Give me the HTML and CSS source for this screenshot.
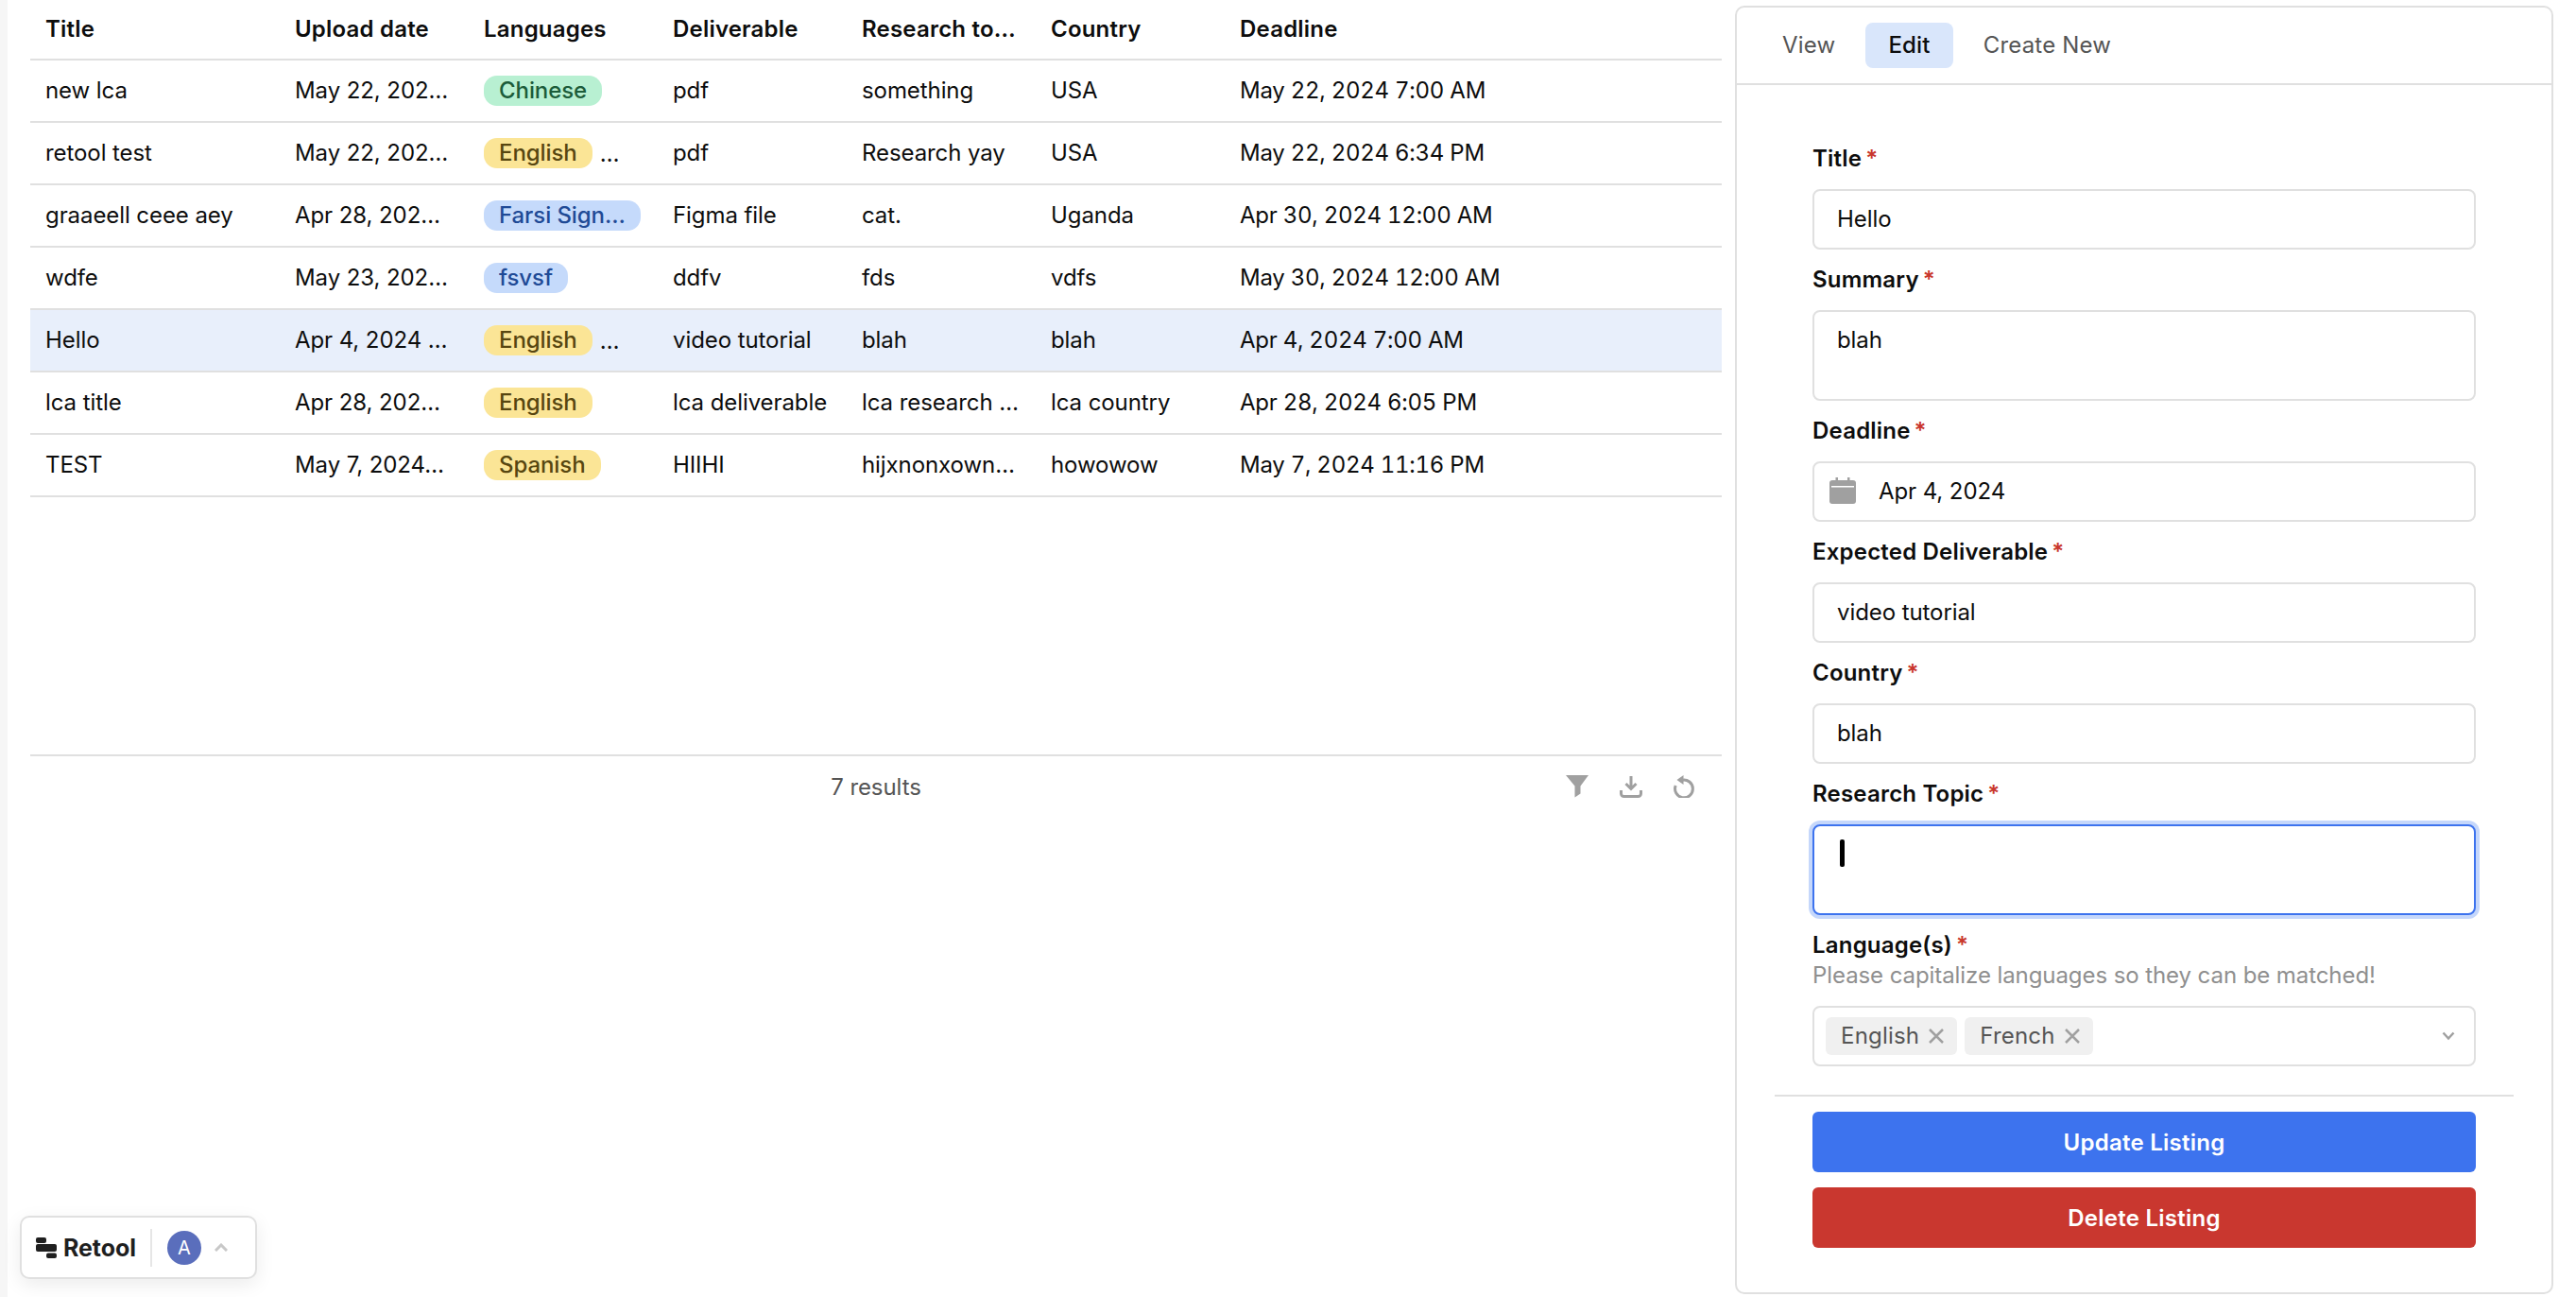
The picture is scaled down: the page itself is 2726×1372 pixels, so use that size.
FILE: index.html
```html
<!DOCTYPE html>
<html lang="en">
<head>
    <meta charset="UTF-8">
    <meta name="viewport" content="width=device-width, initial-scale=1.0">
    <title>Listings</title>
    <link rel="stylesheet" href="styles.css">
</head>
<body>
    <div class="strip"></div>

    <main class="listings">
        <div class="table-wrap">
            <table class="table">
                <thead>
                    <tr>
                        <th class="col-title">Title</th>
                        <th class="col-std">Upload date</th>
                        <th class="col-std">Languages</th>
                        <th class="col-std">Deliverable</th>
                        <th class="col-std">Research to…</th>
                        <th class="col-std">Country</th>
                        <th>Deadline</th>
                    </tr>
                </thead>
                <tbody>
                    <tr>
                        <td>new lca</td>
                        <td>May 22, 202…</td>
                        <td><div class="pills"><span class="pill pill-green">Chinese</span></div></td>
                        <td>pdf</td>
                        <td>something</td>
                        <td>USA</td>
                        <td class="num">May 22, 2024 7:00 AM</td>
                    </tr>
                    <tr>
                        <td>retool test</td>
                        <td>May 22, 202…</td>
                        <td><div class="pills"><span class="pill pill-yellow">English</span><span class="more">…</span></div></td>
                        <td>pdf</td>
                        <td>Research yay</td>
                        <td>USA</td>
                        <td class="num">May 22, 2024 6:34 PM</td>
                    </tr>
                    <tr>
                        <td>graaeell ceee aey</td>
                        <td>Apr 28, 202…</td>
                        <td><div class="pills"><span class="pill pill-blue">Farsi Sign…</span></div></td>
                        <td>Figma file</td>
                        <td>cat.</td>
                        <td>Uganda</td>
                        <td class="num">Apr 30, 2024 12:00 AM</td>
                    </tr>
                    <tr>
                        <td>wdfe</td>
                        <td>May 23, 202…</td>
                        <td><div class="pills"><span class="pill pill-blue">fsvsf</span></div></td>
                        <td>ddfv</td>
                        <td>fds</td>
                        <td>vdfs</td>
                        <td class="num">May 30, 2024 12:00 AM</td>
                    </tr>
                    <tr class="selected">
                        <td>Hello</td>
                        <td>Apr 4, 2024 …</td>
                        <td><div class="pills"><span class="pill pill-yellow">English</span><span class="more">…</span></div></td>
                        <td>video tutorial</td>
                        <td>blah</td>
                        <td>blah</td>
                        <td class="num">Apr 4, 2024 7:00 AM</td>
                    </tr>
                    <tr>
                        <td>lca title</td>
                        <td>Apr 28, 202…</td>
                        <td><div class="pills"><span class="pill pill-yellow">English</span></div></td>
                        <td>lca deliverable</td>
                        <td>lca research …</td>
                        <td>lca country</td>
                        <td class="num">Apr 28, 2024 6:05 PM</td>
                    </tr>
                    <tr>
                        <td>TEST</td>
                        <td>May 7, 2024…</td>
                        <td><div class="pills"><span class="pill pill-yellow">Spanish</span></div></td>
                        <td>HIIHI</td>
                        <td>hijxnonxown…</td>
                        <td>howowow</td>
                        <td class="num">May 7, 2024 11:16 PM</td>
                    </tr>
                </tbody>
            </table>
        </div>
        <div class="table-footer">
            <span></span>
            <span class="results">7 results</span>
            <div class="table-actions">
                <svg class="icon" width="24" height="24" viewBox="0 0 24 24"><path d="M0 0H24L15.5 11.5V19.5L9.5 23.5V11.5Z" fill="#a0a0a0"/></svg>
                <svg class="icon" width="24" height="24" viewBox="0 0 24 24" fill="none" stroke="#a0a0a0" stroke-width="3"><path d="M12 1V14M6.5 9L12 14.5L17.5 9"/><path d="M1.5 16V19.5A3 3 0 0 0 4.500 22.500H19.500A3 3 0 0 0 22.500 19.500V16"/></svg>
                <svg class="icon" width="22" height="24" viewBox="0 0 22 24" fill="none"><path d="M9 5.200A9.400 9.400 0 1 1 2.200 11" stroke="#a0a0a0" stroke-width="3"/><path d="M10.500 0V10L3.500 5Z" fill="#a0a0a0"/></svg>
            </div>
        </div>
    </main>

    <aside class="panel">
        <nav class="tabs">
            <span class="tab">View</span>
            <span class="tab tab-active">Edit</span>
            <span class="tab">Create New</span>
        </nav>
        <form class="form">
            <div class="label">Title<span class="req">*</span></div>
            <div class="field">Hello</div>

            <div class="label">Summary<span class="req">*</span></div>
            <div class="field field-tall">blah</div>

            <div class="label">Deadline<span class="req">*</span></div>
            <div class="field field-date">
                <svg width="28" height="28" viewBox="0 0 28 28"><rect y="3" width="28" height="25" rx="3" fill="#a0a0a0"/><rect x="2" y="9" width="24" height="1.500" fill="#fff"/><rect x="6.500" y="0" width="2.500" height="7" fill="#a0a0a0"/><rect x="19" y="0" width="2.500" height="7" fill="#a0a0a0"/></svg>
                <span>Apr 4, 2024</span>
            </div>

            <div class="label">Expected Deliverable<span class="req">*</span></div>
            <div class="field">video tutorial</div>

            <div class="label">Country<span class="req">*</span></div>
            <div class="field">blah</div>

            <div class="label">Research Topic<span class="req">*</span></div>
            <div class="field field-tall field-focus"><span class="caret"></span></div>

            <div class="label">Language(s)<span class="req">*</span></div>
            <div class="help">Please capitalize languages so they can be matched!</div>
            <div class="field field-select">
                <span class="tag">English<svg width="16" height="16" viewBox="0 0 16 16" stroke="#a0a0a0" stroke-width="2.500"><path d="M1 1L15 15M15 1L1 15"/></svg></span>
                <span class="tag">French<svg width="16" height="16" viewBox="0 0 16 16" stroke="#a0a0a0" stroke-width="2.500"><path d="M1 1L15 15M15 1L1 15"/></svg></span>
                <svg class="chevron" width="14" height="10" viewBox="0 0 14 10" fill="none" stroke="#a0a0a0" stroke-width="2.500"><path d="M1.500 1.500L7 7.500L12.500 1.500"/></svg>
            </div>
        </form>
        <div class="actions">
            <button type="button" class="btn btn-blue">Update Listing</button>
            <button type="button" class="btn btn-red">Delete Listing</button>
        </div>
    </aside>

    <div class="retool-badge">
        <svg width="22" height="22" viewBox="0 0 22 22" fill="#1f1f1f"><rect width="11" height="6" rx="2"/><rect y="7" width="22" height="8" rx="2"/><rect x="11" y="16.500" width="11" height="5.500" rx="2"/></svg>
        <span class="retool-name">Retool</span>
        <span class="retool-sep"></span>
        <span class="avatar">A</span>
        <svg width="14" height="9" viewBox="0 0 14 9" fill="none" stroke="#c8c8c8" stroke-width="3"><path d="M1 8L7 2L13 8"/></svg>
    </div>
</body>
</html>
```

FILE: styles.css
```css
* {
    box-sizing: border-box;
}

html, body {
    height: 100%;
}

body {
    margin: 0;
    display: flex;
    height: 1372px;
    overflow: hidden;
    background-color: #fff;
    color: #0d0d0d;
    font-family: Inter, "Liberation Sans", sans-serif;
    font-size: 24px;
    letter-spacing: -0.08px;
}

.strip {
    width: 8px;
    background-color: #f6f6f6;
}

.listings {
    flex: 1;
    min-width: 0;
    padding: 0 14px 0 24px;
}

.table-wrap {
    height: 798px;
}

.table {
    width: 100%;
    table-layout: fixed;
    border-collapse: separate;
    border-spacing: 0;
}

.table th,
.table td {
    padding: 0 16px 2px;
    white-space: nowrap;
    text-align: left;
    border-bottom: 2px solid #e0e0e0;
}

.table th {
    height: 64px;
    font-weight: 600;
    letter-spacing: 0.2px;
}

.table td {
    height: 66px;
}

.table td.num {
    font-variant-numeric: tabular-nums;
    letter-spacing: -0.26px;
}

.col-title {
    width: 264px;
}

.col-std {
    width: 200px;
}

.selected td {
    background-color: #e8effb;
}

.pills {
    display: flex;
    align-items: center;
    margin-bottom: -2px;
}

.pill {
    height: 32px;
    line-height: 32px;
    padding: 0 16px;
    border-radius: 14px;
    font-weight: 500;
}

.pill-green {
    background-color: #b8f0d2;
    color: #1c5c3a;
}

.pill-yellow {
    background-color: #fbe596;
    color: #574610;
}

.pill-blue {
    background-color: #c5dafb;
    color: #1f4a96;
}

.more {
    margin-left: 8px;
}

.table-footer {
    display: grid;
    grid-template-columns: 1fr auto 1fr;
    align-items: center;
    height: 66px;
    border-top: 2px solid #e0e0e0;
}

.results {
    color: #555;
}

.table-actions {
    display: flex;
    justify-content: flex-end;
    align-items: center;
    gap: 33px;
    padding-right: 29px;
}

.icon {
    display: block;
}

.panel {
    display: flex;
    flex-direction: column;
    flex: none;
    width: 866px;
    height: 1363px;
    margin: 6px 24px 3px 0;
    border: 2px solid #e0e0e0;
    border-radius: 10px;
}

.tabs {
    display: flex;
    gap: 8px;
    padding: 16px 24px;
    border-bottom: 2px solid #e0e0e0;
}

.tab {
    height: 48px;
    line-height: 48px;
    padding: 0 24px;
    border-radius: 8px;
    color: #555;
    letter-spacing: 0.2px;
}

.tab-active {
    background-color: #d9e6fb;
    color: #0d0d0d;
    font-weight: 500;
}

.form {
    padding: 62px 80px 30px;
}

.label {
    height: 32px;
    line-height: 32px;
    margin-bottom: 16px;
    font-weight: 600;
    letter-spacing: 0.2px;
}

.req {
    margin-left: 4px;
    color: #c9372c;
}

.help {
    height: 32px;
    line-height: 32px;
    margin-top: -16px;
    margin-bottom: 16px;
    color: #8f8f8f;
}

.field {
    height: 64px;
    line-height: 60px;
    margin-bottom: 16px;
    padding: 0 24px;
    background-color: #fff;
    border: 2px solid #e0e0e0;
    border-radius: 8px;
}

.field-tall {
    height: 96px;
    line-height: 32px;
    padding-top: 14px;
}

.field-date {
    display: flex;
    align-items: center;
    gap: 24px;
    padding-left: 16px;
}

.field-date svg {
    margin-top: -3px;
}

.field-focus {
    position: relative;
    border-color: #3d73ee;
    box-shadow: 0 0 0 4px #c5d7fb;
}

.caret {
    display: block;
    width: 5px;
    height: 29px;
    margin-left: 3px;
    border-radius: 2px;
    background-color: #000;
}

.field-select {
    display: flex;
    align-items: center;
    gap: 8px;
    margin-bottom: 0;
    padding: 0 20px 0 12px;
}

.tag {
    display: flex;
    align-items: center;
    gap: 10px;
    height: 40px;
    line-height: 40px;
    padding: 0 14px 0 16px;
    border-radius: 6px;
    background-color: #f0f0f0;
    color: #555;
    letter-spacing: 0.2px;
}

.chevron {
    margin-left: auto;
}

.actions {
    display: flex;
    flex-direction: column;
    gap: 16px;
    margin: 0 40px;
    padding: 16px 40px 0;
    border-top: 2px solid #e0e0e0;
}

.btn {
    height: 64px;
    border: none;
    border-radius: 6px;
    color: #fff;
    font-family: inherit;
    font-size: 24px;
    font-weight: 600;
    letter-spacing: 0.25px;
    cursor: pointer;
}

.btn-blue {
    background-color: #3d73ee;
}

.btn-red {
    background-color: #c9372f;
}

.retool-badge {
    position: absolute;
    left: 21px;
    top: 1286px;
    display: flex;
    align-items: center;
    width: 251px;
    height: 67px;
    padding-left: 15px;
    background-color: #fff;
    border: 2px solid #e0e0e0;
    border-radius: 10px;
    box-shadow: 0 6px 20px rgba(0, 0, 0, 0.08);
}

.retool-name {
    margin-left: 7px;
    font-size: 25px;
    font-weight: 700;
    color: #1f1f1f;
}

.retool-sep {
    width: 2px;
    height: 40px;
    margin: 0 16px 0 15px;
    background-color: #e6e6e6;
}

.avatar {
    width: 36px;
    height: 36px;
    margin-right: 14px;
    line-height: 36px;
    border-radius: 50%;
    background-color: #5a6ebc;
    color: #fff;
    font-size: 20px;
    text-align: center;
}
```
